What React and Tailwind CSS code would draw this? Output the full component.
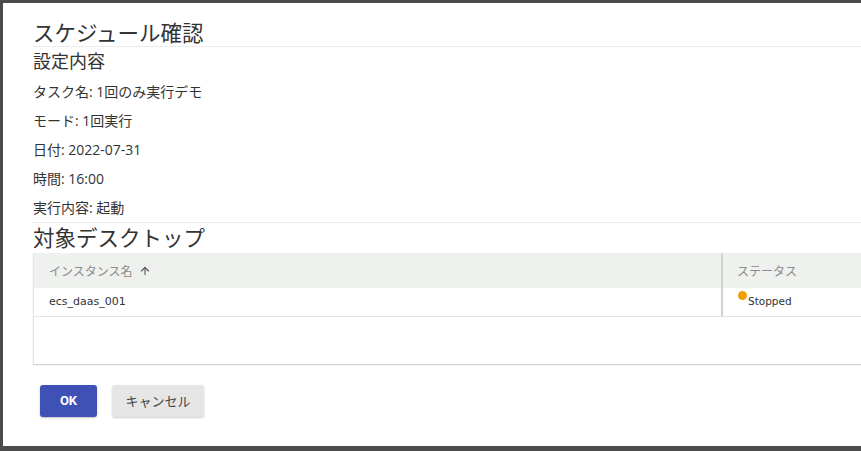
import { ArrowUp } from "lucide-react";

const settings = [
  ["タスク名", "1回のみ実行デモ"],
  ["モード", "1回実行"],
  ["日付", "2022-07-31"],
  ["時間", "16:00"],
  ["実行内容", "起動"],
];

const jp = "font-['Noto_Sans_CJK_JP','Noto_Sans',sans-serif]";

function App() {
  return (
    <div className={`w-[861px] h-[451px] overflow-hidden bg-[#4b4b4b] pt-[3px] pl-[3px] ${jp}`}>
      <div className="w-[920px] h-[443px] bg-white pt-[15px] pl-[30px] text-[#333]">
        <div className="h-[29px] leading-[28px] text-[21.5px] border-b border-[#ececec]">
          スケジュール確認
        </div>
        <div className="h-[26px] leading-[26px] text-[18px]">設定内容</div>
        <div className="mt-[4px] flex flex-col border-b border-[#ececec]">
          {settings.map(([k, v]) => (
            <div
              key={k}
              className="h-[29px] leading-[29px] text-[14px] font-['Open_Sans','Noto_Sans_CJK_JP',sans-serif]"
            >
              {k}: {v}
            </div>
          ))}
        </div>
        <div className="h-[28px] leading-[28px] text-[21.5px]">対象デスクトップ</div>
        <div className="mt-[2px] h-[111px] border-l border-[#e4e4e4] shadow-[0_1px_1px_rgba(0,0,0,0.18)]">
          <div className="flex h-[35px] bg-[#eef1ee] text-[12px] text-[#8a8a8a] items-center">
            <div className="w-[687px] pl-[15px] flex items-center gap-[6px]">
              インスタンス名
              <ArrowUp size={12} strokeWidth={2.2} className="text-[#555]" />
            </div>
            <div className="w-[2px] h-full bg-[#cfd2cf]" />
            <div className="pl-[14px]">ステータス</div>
          </div>
          <div className="flex h-[29px] items-center border-b border-[#e4e4e4] text-[11px] text-[#333] font-['DejaVu_Sans',sans-serif]">
            <div className="w-[687px] pl-[15px]">ecs_daas_001</div>
            <div className="w-[2px] h-full bg-[#cfd2cf]" />
            <div className="pl-[15px] flex items-start">
              <span className="mt-[-3px] w-[9px] h-[9px] rounded-full bg-[#f5a000] border border-[#e89400]" />
              <span className="ml-[1px] text-[10.5px]">Stopped</span>
            </div>
          </div>
        </div>
        <div className="mt-[21px] ml-[7px] flex gap-[15px]">
          <button className="w-[57px] h-[32px] rounded-[3px] bg-[#3f51b5] text-white text-[13px] font-bold font-['Roboto',sans-serif] shadow-[0_1px_2px_rgba(0,0,0,0.25)]">
            OK
          </button>
          <button className={`w-[92px] h-[32px] rounded-[3px] bg-[#e6e6e6] text-[#444] text-[13px] shadow-[0_1px_2px_rgba(0,0,0,0.2)] ${jp}`}>
            キャンセル
          </button>
        </div>
      </div>
    </div>
  );
}

export default App;
